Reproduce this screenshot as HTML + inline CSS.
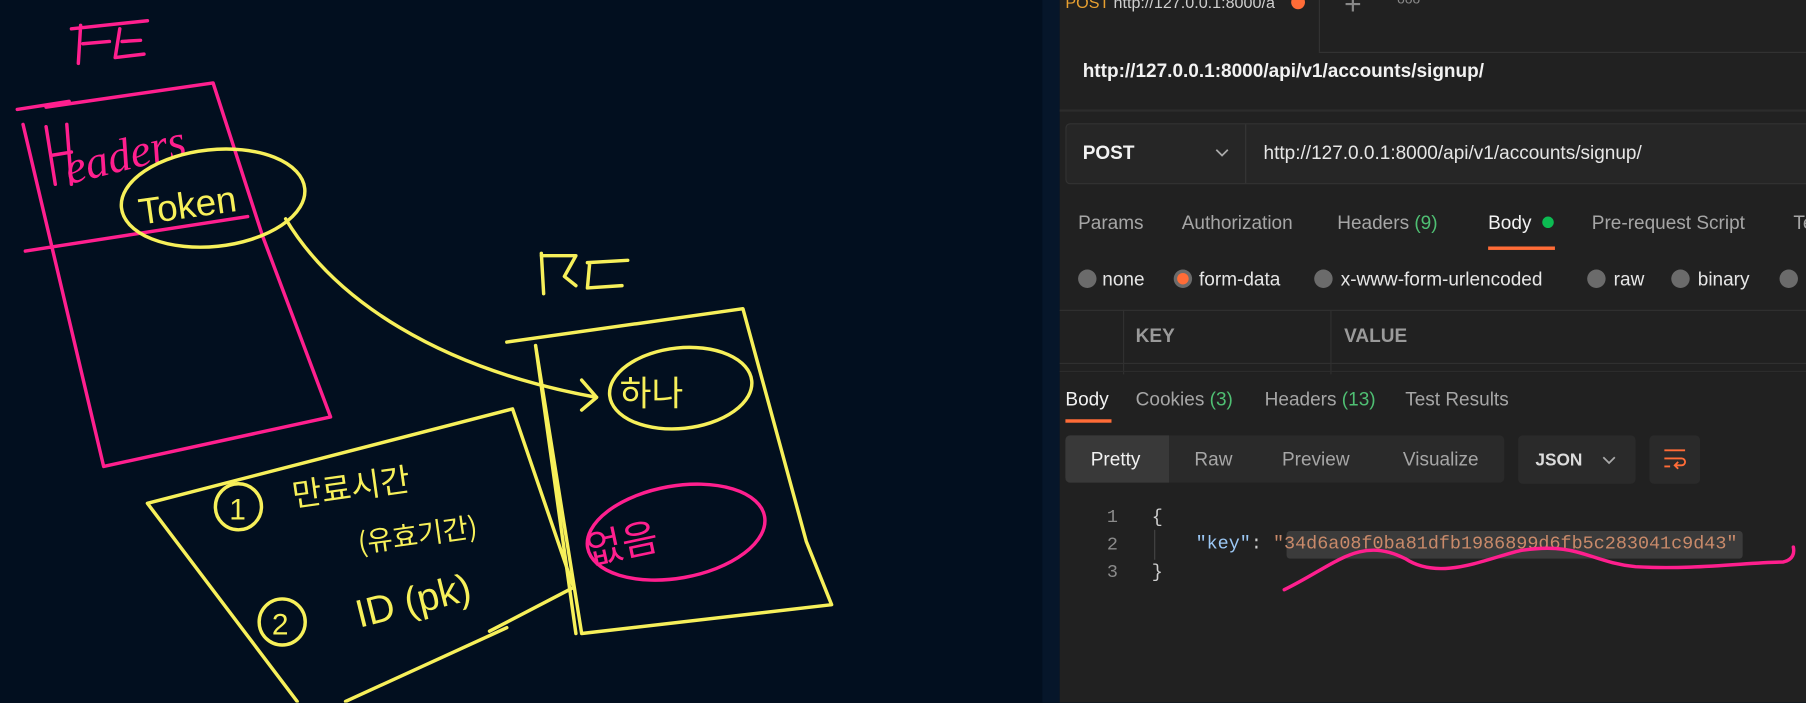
<!DOCTYPE html>
<html><head><meta charset="utf-8"><style>
*{margin:0;padding:0;box-sizing:border-box}
body{width:1806px;height:702px;overflow:hidden;background:#020f1f;font-family:"Liberation Sans","Noto Sans CJK KR",sans-serif}
#w{position:absolute;left:0;top:0;width:1568px;height:610px;transform:scale(1.1518);transform-origin:0 0}
.a{position:absolute;white-space:nowrap}
#pm{position:absolute;left:920px;top:0;width:648px;height:610px;background:#212121;color:#a6a6a6;font-size:16.5px}
#sep{position:absolute;left:905px;top:0;width:15px;height:610px;background:#06162a}
.g{color:#4fbf73}
.r{position:absolute;top:234px;width:16px;height:16px;border-radius:50%;background:#6b6b6b}
</style></head><body><div id="w">
<svg width="905" height="610" style="position:absolute;left:0;top:0" fill="none" stroke-linecap="round" stroke-linejoin="round">
<g stroke="#ff1f8e" stroke-width="3">
<path d="M62 25 L128 18 M70 22 L68 55 M72 38 L95 36 M104 25 L100 50 L125 47 M106 36 L122 35"/>
<path d="M15 95 L60 88 M40 93 L185 72 L228 205 L287 362 L90 405 L20 108 M22 218 L215 188"/>
<path d="M40 110 L48 160 M58 108 L62 160 M44 135 L62 132"/>
<text x="60" y="160" fill="#ff1f8e" stroke="none" font-size="40" font-family="Liberation Serif" transform="rotate(-14 60 160)" font-style="italic">eaders</text>
<ellipse cx="587" cy="462" rx="78" ry="40" transform="rotate(-10 587 462)"/>
<text x="512" y="490" fill="#ff1f8e" stroke="none" font-size="34" font-family="Noto Sans CJK KR" transform="rotate(-12 512 490)">없음</text>
</g>
<g stroke="#f7f05a" stroke-width="3">
<ellipse cx="185" cy="172" rx="80" ry="42" transform="rotate(-6 185 172)"/>
<text x="122" y="195" fill="#f7f05a" stroke="none" font-size="32" transform="rotate(-8 122 195)">Token</text>
<path d="M248 190 C290 260 380 320 518 345 M505 330 L518 345 L505 356"/>
<path d="M470 220 L472 255 M470 222 L500 222 L490 240 L500 248 M510 228 L545 226 M512 228 L510 250 L540 248"/>
<path d="M440 297 L645 268 L700 470 L722 525 L505 550 L465 300 L500 550"/>
<ellipse cx="591" cy="337" rx="62" ry="35" transform="rotate(-6 591 337)"/>
<text x="538" y="352" fill="#f7f05a" stroke="none" font-size="30" font-family="Noto Sans CJK KR">하나</text>
<path d="M128 437 L445 355 L498 510 L425 548 M440 545 L300 609 M128 437 L258 609"/>
<circle cx="207" cy="440" r="20"/><circle cx="245" cy="540" r="20"/>
<text x="199" y="451" fill="#f7f05a" stroke="none" font-size="26">1</text>
<text x="236" y="551" fill="#f7f05a" stroke="none" font-size="26">2</text>
<text x="255" y="440" fill="#f7f05a" stroke="none" font-size="28" font-family="Noto Sans CJK KR" transform="rotate(-8 255 440)">만료시간</text>
<text x="312" y="480" fill="#f7f05a" stroke="none" font-size="24" font-family="Noto Sans CJK KR" transform="rotate(-8 312 480)">(유효기간)</text>
<text x="312" y="545" fill="#f7f05a" stroke="none" font-size="34" transform="rotate(-14 312 545)">ID (pk)</text>
</g>
</svg>
<div id="sep"></div>
<div id="pm">
<div class="a" style="left:5px;top:-6px;font-size:14px;color:#e8a030">POST <span style="color:#cfcfcf">http://127.0.0.1:8000/a</span></div>
<div class="a" style="left:201px;top:-4px;width:12px;height:12px;border-radius:50%;background:#ff6c37"></div>
<div class="a" style="left:225px;top:0;width:1px;height:45px;background:#333"></div>
<div class="a" style="left:225px;top:45px;width:423px;height:1px;background:#333"></div>
<div class="a" style="left:247px;top:-12px;font-size:26px;color:#888">+</div>
<div class="a" style="left:293px;top:-8px;font-size:12px;color:#888">ooo</div>
<div class="a" style="left:20px;top:53px;font-weight:bold;color:#f2f2f2">http://127.0.0.1:8000/api/v1/accounts/signup/</div>
<div class="a" style="left:0;top:95px;width:648px;height:2px;background:#2c2c2c"></div>
<div class="a" style="left:5px;top:107px;width:650px;height:53px;border:1px solid #333;border-radius:4px;background:#262626"></div>
<div class="a" style="left:161px;top:108px;width:1px;height:51px;background:#363636"></div>
<div class="a" style="left:20px;top:124px;font-weight:bold;color:#f2f2f2">POST</div>
<svg class="a" style="left:134px;top:128px" width="14" height="10" fill="none" stroke="#aaa" stroke-width="1.5"><path d="M2 2l5 5 5-5"/></svg>
<div class="a" style="left:177px;top:124px;color:#e6e6e6">http://127.0.0.1:8000/api/v1/accounts/signup/</div>
<div class="a" style="left:16px;top:185px">Params</div>
<div class="a" style="left:106px;top:185px">Authorization</div>
<div class="a" style="left:241px;top:185px">Headers <span class="g">(9)</span></div>
<div class="a" style="left:372px;top:185px;color:#f2f2f2">Body</div>
<div class="a" style="left:419px;top:188px;width:10px;height:10px;border-radius:50%;background:#0cbb52"></div>
<div class="a" style="left:372px;top:214px;width:58px;height:3px;background:#ff6c37"></div>
<div class="a" style="left:462px;top:185px">Pre-request Script</div>
<div class="a" style="left:637px;top:185px">Te</div>
<div class="r" style="left:16px"></div><div class="a" style="left:37px;top:234px;color:#e6e6e6">none</div>
<div class="r" style="left:99px"><div style="margin:3px;width:10px;height:10px;border-radius:50%;background:#ff6c37"></div></div><div class="a" style="left:121px;top:234px;color:#e6e6e6">form-data</div>
<div class="r" style="left:221px"></div><div class="a" style="left:244px;top:234px;color:#e6e6e6">x-www-form-urlencoded</div>
<div class="r" style="left:458px"></div><div class="a" style="left:481px;top:234px;color:#e6e6e6">raw</div>
<div class="r" style="left:531px"></div><div class="a" style="left:554px;top:234px;color:#e6e6e6">binary</div>
<div class="r" style="left:625px"></div>
<div class="a" style="left:0;top:269px;width:648px;height:1px;background:#303030"></div>
<div class="a" style="left:0;top:315px;width:648px;height:1px;background:#303030"></div>
<div class="a" style="left:55px;top:269px;width:1px;height:56px;background:#303030"></div>
<div class="a" style="left:235px;top:269px;width:1px;height:56px;background:#303030"></div>
<div class="a" style="left:66px;top:283px;font-weight:bold;color:#9a9a9a">KEY</div>
<div class="a" style="left:247px;top:283px;font-weight:bold;color:#9a9a9a">VALUE</div>
<div class="a" style="left:0;top:322px;width:648px;height:1px;background:#2c2c2c"></div>
<div class="a" style="left:5px;top:338px;color:#f2f2f2">Body</div>
<div class="a" style="left:5px;top:364px;width:40px;height:3px;background:#ff6c37"></div>
<div class="a" style="left:66px;top:338px">Cookies <span class="g">(3)</span></div>
<div class="a" style="left:178px;top:338px">Headers <span class="g">(13)</span></div>
<div class="a" style="left:300px;top:338px">Test Results</div>
<div class="a" style="left:5px;top:378px;width:381px;height:41px;border-radius:4px;background:#2a2a2a"></div>
<div class="a" style="left:5px;top:378px;width:90px;height:41px;border-radius:4px 0 0 4px;background:#393939"></div>
<div class="a" style="left:27px;top:390px;color:#f2f2f2">Pretty</div>
<div class="a" style="left:117px;top:390px">Raw</div>
<div class="a" style="left:193px;top:390px">Preview</div>
<div class="a" style="left:298px;top:390px">Visualize</div>
<div class="a" style="left:398px;top:378px;width:102px;height:42px;border-radius:4px;background:#2a2a2a"></div>
<div class="a" style="left:413px;top:391px;font-weight:bold;font-size:15px;color:#dcdcdc">JSON</div>
<svg class="a" style="left:470px;top:395px" width="14" height="10" fill="none" stroke="#aaa" stroke-width="1.5"><path d="M2 2l5 5 5-5"/></svg>
<div class="a" style="left:512px;top:378px;width:44px;height:42px;border-radius:4px;background:#2a2a2a"></div>
<svg class="a" style="left:523px;top:388px" width="22" height="22" fill="none" stroke="#ff6c37" stroke-width="1.6"><path d="M2 3H20M2 10H17a3 3 0 0 1 0 6H12M14 13l-3 3 3 3M2 17H7"/></svg>
<div style="font-family:'Liberation Mono',monospace;font-size:16px">
<div class="a" style="left:41px;top:440px;color:#8a8a8a">1</div>
<div class="a" style="left:41px;top:464px;color:#8a8a8a">2</div>
<div class="a" style="left:41px;top:488px;color:#8a8a8a">3</div>
<div class="a" style="left:80px;top:440px;color:#cfcfcf">{</div>
<div class="a" style="left:80px;top:488px;color:#cfcfcf">}</div>
<div class="a" style="left:82px;top:460px;width:1px;height:26px;background:#444"></div>
<div class="a" style="left:197px;top:461px;width:396px;height:24px;border-radius:3px;background:#3b3b3b"></div>
<div class="a" style="left:118px;top:463px;color:#9cc8f5">"key"<span style="color:#cfcfcf">: </span><span style="color:#c98a6a">"34d6a08f0ba81dfb1986899d6fb5c283041c9d43"</span></div>
</div>
</div>
<svg width="1568" height="610" style="position:absolute;left:0;top:0" fill="none"><path d="M1115 512 C1160 490 1180 465 1220 485 C1250 505 1290 485 1320 478 C1370 470 1380 488 1420 492 C1470 495 1520 488 1548 488 C1557 486 1558 480 1557 475" stroke="#ff1f8e" stroke-width="3" stroke-linecap="round"/></svg>
</div></body></html>
